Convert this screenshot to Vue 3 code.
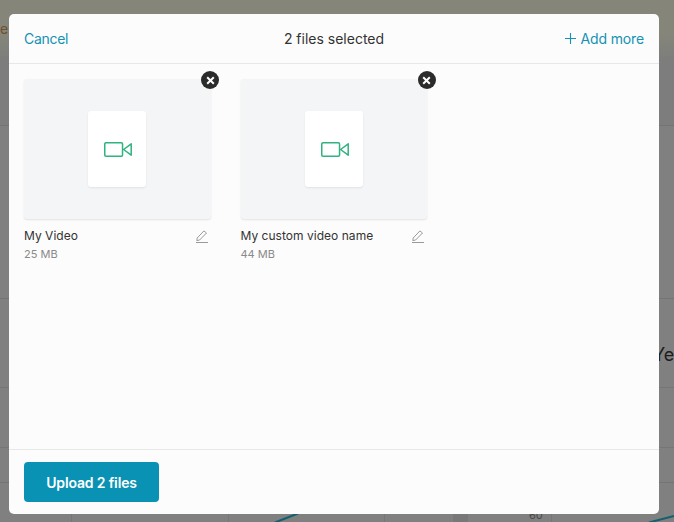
<script setup>
const files = [
  { name: 'My Video', size: '25 MB' },
  { name: 'My custom video name', size: '44 MB' },
]
</script>

<template>
  <div class="page">
    <div class="backdrop">
      <span class="peek-e">e</span>
      <span class="peek-ye">Ye</span>
      <span class="peek-60">60</span>
      <svg class="chart" width="674" height="10" viewBox="0 0 674 10" fill="none">
        <path d="M275 10.5 L298 1.5" stroke="#14606f" stroke-width="2" />
        <path d="M649 10.5 L674 4" stroke="#14606f" stroke-width="2" />
      </svg>
    </div>

    <section class="modal">
      <header class="head">
        <span class="link cancel">Cancel</span>
        <span class="title">2 files selected</span>
        <span class="link add">
          <svg width="11" height="11" viewBox="0 0 11 11" fill="none">
            <path d="M5.5 0v11M0 5.5h11" stroke="#1592b4" stroke-width="1.1" />
          </svg>
          Add more
        </span>
      </header>

      <div class="body">
        <article v-for="f in files" :key="f.name" class="card">
          <div class="thumb">
            <div class="sheet">
              <svg class="cam" width="28" height="15" viewBox="0 0 28 15" fill="none" stroke="#2fb380" stroke-width="1.5" stroke-linejoin="round">
                <rect x="0.75" y="0.75" width="17.8" height="13.5" rx="1.2" />
                <path d="M19.6 7.5 L27.2 1.8 V13.2 Z" />
              </svg>
            </div>
            <span class="remove">
              <svg width="9" height="9" viewBox="0 0 9 9" fill="none">
                <path d="M1.2 1.2l6.6 6.6M7.8 1.2L1.2 7.8" stroke="#fff" stroke-width="2" />
              </svg>
            </span>
          </div>
          <div class="meta">
            <div class="row">
              <span class="name">{{ f.name }}</span>
              <svg class="pen" width="12" height="13" viewBox="0 0 12 13" fill="none" stroke="#9a9a9a" stroke-width="1">
                <path d="M1.2 8 L7.9 .9 L10.5 3 L3.6 10 L.8 10.6 Z" />
                <path d="M0 12.5 H12" />
              </svg>
            </div>
            <div class="size">{{ f.size }}</div>
          </div>
        </article>
      </div>

      <footer class="foot">
        <button class="upload" type="button">Upload 2 files</button>
      </footer>
    </section>
  </div>
</template>

<style>
html, body { margin: 0; padding: 0; }
</style>

<style scoped>
.page {
  position: relative;
  width: 674px;
  height: 522px;
  overflow: hidden;
  font-family: Inter, "Liberation Sans", sans-serif;
}
.backdrop {
  position: relative;
  height: 100%;
  background-color: #808080;
  background-image:
    linear-gradient(#747474, #747474),
    linear-gradient(#747474, #747474),
    linear-gradient(#767676, #767676),
    linear-gradient(#767676, #767676),
    linear-gradient(#747474, #747474),
    linear-gradient(#767676, #767676),
    linear-gradient(#767676, #767676),
    linear-gradient(#767676, #767676),
    linear-gradient(#767676, #767676),
    linear-gradient(#787878, #787878),
    linear-gradient(#85857a 0, #85857a 34px, #7c7d7c 62px, #7c7d7c 125px);
  background-repeat: no-repeat;
  background-size:
    100% 1px,
    100% 1px,
    100% 1px,
    100% 1px,
    100% 1px,
    1px 8px,
    1px 8px,
    1px 8px,
    1px 8px,
    15px 8px,
    100% 125px;
  background-position:
    0 125px,
    0 298px,
    0 387px,
    0 447px,
    0 482px,
    71px 514px,
    228px 514px,
    384px 514px,
    551px 514px,
    453px 514px,
    0 0;
}
.peek-e {
  position: absolute;
  left: 0;
  top: 20px;
  font-size: 14px;
  color: #6e4f2e;
  line-height: 17px;
}
.peek-ye {
  position: absolute;
  left: 653px;
  top: 344px;
  font-size: 18px;
  line-height: 22px;
  color: #1c1c1c;
}
.peek-60 {
  position: absolute;
  left: 529px;
  top: 509px;
  font-size: 11px;
  line-height: 13px;
  color: #4a4a4a;
}
.chart {
  position: absolute;
  left: 0;
  bottom: 0;
}
.modal {
  position: absolute;
  left: 9px;
  top: 14px;
  width: 650px;
  height: 500px;
  background: #fcfcfc;
  border-radius: 5px;
  display: flex;
  flex-direction: column;
}
.head {
  height: 50px;
  flex: none;
  box-sizing: border-box;
  padding: 0 15px 1px;
  border-bottom: 1px solid #e8e8e8;
  display: grid;
  grid-template-columns: 1fr auto 1fr;
  align-items: center;
}
.link {
  font-size: 14px;
  color: #1592b4;
}
.cancel {
  letter-spacing: -0.3px;
}
.add {
  justify-self: end;
  display: flex;
  align-items: center;
  gap: 5px;
  letter-spacing: -0.15px;
}
.title {
  font-size: 14px;
  color: #333;
}
.body {
  flex: 1;
  display: flex;
  gap: 30px;
  padding: 15px 15px 0;
  align-items: flex-start;
}
.card {
  width: 186.5px;
}
.thumb {
  position: relative;
  height: 140px;
  background: #f3f5f7;
  border-radius: 3px;
  box-shadow: 0 1px 2px rgba(0, 0, 0, .1);
  display: flex;
  justify-content: center;
  align-items: center;
}
.sheet {
  width: 58px;
  height: 76px;
  background: #fff;
  border-radius: 3px;
  box-shadow: 0 1px 2px rgba(0, 0, 0, .08);
  display: flex;
  align-items: center;
  justify-content: center;
}
.cam {
  margin-left: 1.5px;
}
.remove {
  position: absolute;
  right: -8.5px;
  top: -8px;
  width: 18px;
  height: 18px;
  border-radius: 50%;
  background: #2b2b2b;
  display: flex;
  align-items: center;
  justify-content: center;
}
.meta {
  padding-top: 9px;
}
.row {
  display: flex;
  justify-content: space-between;
  align-items: center;
  padding-right: 3px;
}
.pen {
  margin-top: 1px;
}
.name {
  font-size: 12px;
  line-height: 16px;
  letter-spacing: 0.03px;
  color: #333;
}
.size {
  margin-top: 3px;
  font-size: 11px;
  line-height: 14px;
  color: #8a8a8a;
}
.foot {
  height: 65px;
  flex: none;
  box-sizing: border-box;
  border-top: 1px solid #e8e8e8;
  padding: 12px 15px;
}
.upload {
  display: block;
  width: 135px;
  height: 40px;
  border: 0;
  border-radius: 4px;
  background: #0a92b4;
  color: #fff;
  font: 600 14px Inter, "Liberation Sans", sans-serif;
  letter-spacing: -0.15px;
  padding: 0;
}
</style>
